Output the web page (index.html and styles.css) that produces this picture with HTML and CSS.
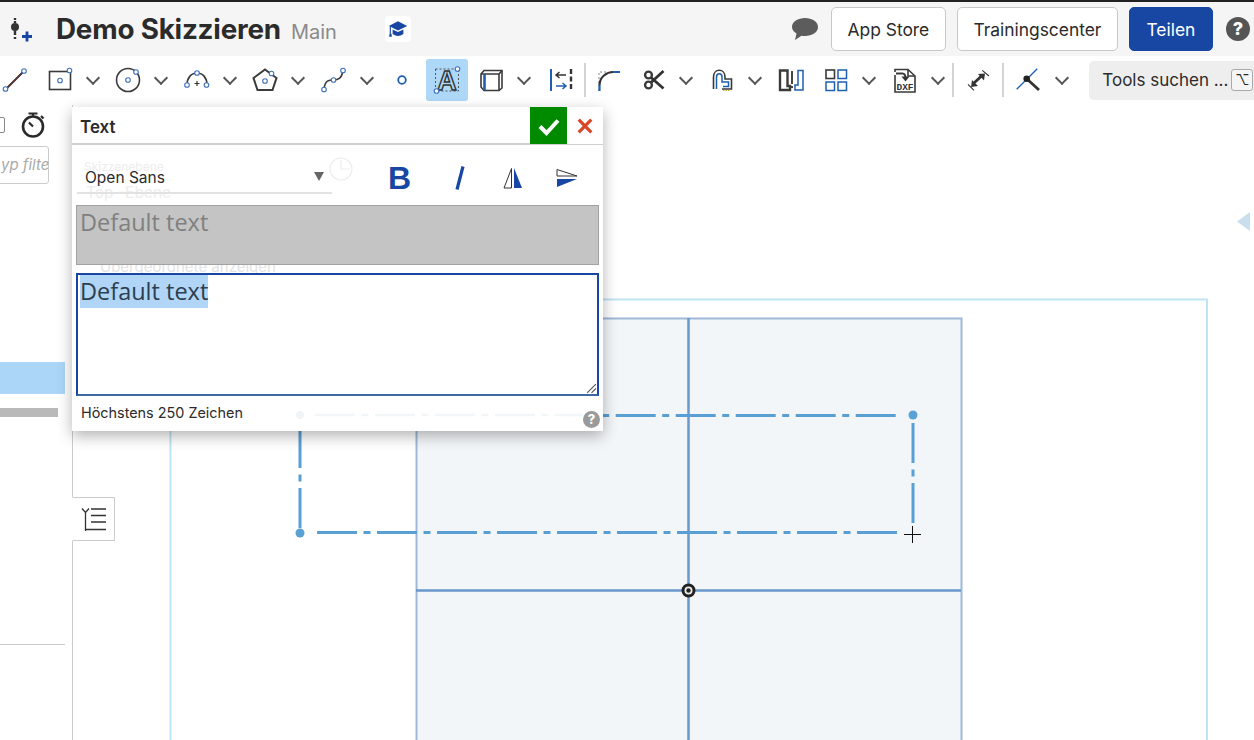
FILE: index.html
```html
<!DOCTYPE html>
<html lang="en">
<head>
    <meta charset="UTF-8">
    <meta name="viewport" content="width=device-width, initial-scale=1.0">
    <title>Demo Skizzieren</title>
    <link rel="stylesheet" href="styles.css">
</head>
<body>
    <header class="topbar">
        <svg class="doc-icon" viewBox="0 0 26 26">
            <path d="M6 1v2M6 16v2M6 20v2" stroke="#333" stroke-width="2.400" fill="none"/>
            <circle cx="6" cy="10" r="4" fill="#333"/>
            <path d="M6 4v2M6 14v2" stroke="#333" stroke-width="2.400"/>
            <path d="M13 19.500h10M18 14.500v10" stroke="#1747a3" stroke-width="2.800"/>
        </svg>
        <h1 class="doc-title">Demo Skizzieren</h1>
        <span class="doc-branch">Main</span>
        <span class="hat">
            <svg viewBox="0 0 26 26">
                <path d="M13 3 25 9l-12 6L1 9z" fill="#1747a3"/>
                <path d="M6 13.500v6q7 5 14 0v-6l-7 3.500z" fill="#1747a3"/>
                <path d="M3 10v9" stroke="#1747a3" stroke-width="1.500"/>
                <path d="M2 19h2.500l.5 4H1.500z" fill="#1747a3"/>
            </svg>
        </span>
        <svg class="chat" viewBox="0 0 28 26">
            <path d="M14 2c7 0 13 3.500 13 9s-6 9-13 9q-2 0-3.500-.3L4 24l1.500-6.500C3 16 1 13.800 1 11c0-5.500 6-9 13-9z" fill="#5c5c5c"/>
        </svg>
        <button class="btn app-store">App Store</button>
        <button class="btn training">Trainingscenter</button>
        <button class="btn share">Teilen</button>
        <span class="help-top">?</span>
    </header>

    <nav class="toolbar">
        <span class="tool first">
            <svg viewBox="0 0 32 32"><path d="M7 25 25 7" stroke="#222" stroke-width="1.800"/><path d="M8 24 24 8" stroke="#c0392b" stroke-width=".5"/><circle class="pt" cx="6.500" cy="25" r="2.300"/><circle class="pt" cx="25" cy="7" r="2.300"/></svg>
        </span>
        <span class="tool">
            <svg viewBox="0 0 32 32"><rect x="5.500" y="7.500" width="21" height="18" class="ln"/><circle class="pt" cx="16" cy="16.500" r="2.300"/><circle class="pt" cx="25.500" cy="6.500" r="2.300"/></svg>
        </span>
        <span class="chev"></span>
        <span class="tool">
            <svg viewBox="0 0 32 32"><circle cx="16" cy="16" r="11.500" class="ln"/><circle class="pt" cx="16" cy="16" r="2.300"/><circle class="pt" cx="24" cy="8" r="2.300"/></svg>
        </span>
        <span class="chev"></span>
        <span class="tool">
            <svg viewBox="0 0 32 32"><path d="M6 21c0-7 4-12 10-12s10 5 10 12" class="ln"/><circle class="pt" cx="6" cy="21" r="2.300"/><circle class="pt" cx="16" cy="9" r="2.300"/><circle class="pt" cx="25.500" cy="21" r="2.300"/><path d="M13.500 19.500h5M16 17v5" stroke="#333" stroke-width="1.200"/></svg>
        </span>
        <span class="chev"></span>
        <span class="tool">
            <svg viewBox="0 0 32 32"><path d="M16 5.500 27.500 14l-4 12h-15l-4-12z" class="ln thick"/><circle class="pt" cx="16" cy="17" r="2.300"/><circle class="pt" cx="22.500" cy="9.500" r="2.300"/></svg>
        </span>
        <span class="chev"></span>
        <span class="tool">
            <svg viewBox="0 0 32 32"><path d="M6 25c1-9 5-9 9.500-9s8-1 9.500-9.500" class="ln"/><circle class="pt" cx="6" cy="25.500" r="2.300"/><circle class="pt" cx="15.500" cy="16" r="2.300"/><circle class="pt" cx="25" cy="6.500" r="2.300"/></svg>
        </span>
        <span class="chev"></span>
        <span class="tool point">
            <svg viewBox="0 0 32 32"><circle cx="16" cy="16" r="3.800" fill="#fff" stroke="#1f5fb0" stroke-width="1.800"/></svg>
        </span>
        <span class="tool active">
            <svg viewBox="0 0 32 32">
                <rect x="4.500" y="5" width="23" height="22" fill="none" stroke="#555" stroke-dasharray="2 2"/>
                <text x="16" y="25.500" text-anchor="middle" class="glyph">A</text>
                <circle class="pt" cx="26.500" cy="5" r="2.300"/><circle class="pt" cx="5.500" cy="27" r="2.300"/>
            </svg>
        </span>
        <span class="tool">
            <svg viewBox="0 0 32 32"><path d="M6 10 9 6.500h18V24l-3 2.500H9L6 23z" class="ln"/><path d="M6 10h18v16.500M24 10l3-3.500" class="ln"/><path d="M9.500 10v16" stroke="#1f5fb0" stroke-width="2.600"/></svg>
        </span>
        <span class="chev"></span>
        <span class="tool mirror">
            <svg viewBox="0 0 32 32"><path d="M6 5v22" stroke="#1f5fb0" stroke-width="2"/><path d="M26 5v22" stroke="#333" stroke-width="2.400" stroke-dasharray="5 2.500"/><path d="M11 22h10M17.500 19l3.500 3-3.500 3" stroke="#1f5fb0" stroke-width="1.500" fill="none"/><path d="M21 11H11M14.500 8 11 11l3.500 3" stroke="#333" stroke-width="1.500" fill="none"/></svg>
        </span>
        <span class="sep"></span>
        <span class="tool">
            <svg viewBox="0 0 32 32"><path d="M6 27V8h8" fill="none" stroke="#888" stroke-dasharray="2 2"/><path d="M6.500 21C6.500 13 14 8 20 8" fill="none" stroke="#333" stroke-width="2.200"/><path d="M6.500 27v-6M20 8h7" fill="none" stroke="#1f5fb0" stroke-width="2.200"/></svg>
        </span>
        <span class="tool">
            <svg viewBox="0 0 32 32"><circle cx="11.500" cy="11" r="3.400" class="ln heavy"/><circle cx="11.500" cy="21" r="3.400" class="ln heavy"/><path d="M14 13.500 26.500 24.500M14 18.500 26.500 7" stroke="#333" stroke-width="2.800"/></svg>
        </span>
        <span class="chev"></span>
        <span class="tool">
            <svg viewBox="0 0 32 32"><path d="M7.500 25V13c0-9 11.500-9 11.500 0v2h6.500v10H16" class="ln"/><path d="M10.500 25V13c0-4.500 5.500-4.500 5.500 0v5h6.500v4.500H17" class="ln blue-ln"/><path d="M17 26.500h7" stroke="#c9b23c" stroke-dasharray="1.500 1"/></svg>
        </span>
        <span class="chev"></span>
        <span class="tool use">
            <svg viewBox="0 0 32 32"><path d="M5 6.500h7.500V22H15v4H5z" class="ln heavy"/><path d="M17 7v13M17 22v2" stroke="#333" stroke-width="1.800"/><path d="M28 6.500h-5V21h-3v5h8z" class="ln blue-ln"/></svg>
        </span>
        <span class="tool">
            <svg viewBox="0 0 32 32"><rect x="6" y="6" width="8.500" height="8.500" class="ln"/><rect x="18" y="6" width="8.500" height="8.500" class="blu"/><rect x="6" y="18" width="8.500" height="8.500" class="blu"/><rect x="18" y="18" width="8.500" height="8.500" class="blu"/></svg>
        </span>
        <span class="chev"></span>
        <span class="tool">
            <svg viewBox="0 0 32 32"><path d="M6 8V5.500h13L26 12v16H6V11" class="ln"/><path d="M19 5.500V12h7" class="ln"/><path d="M7 9.500h6.500c3 0 3 3 3 5" class="ln thick"/><path d="m12.500 12.500 4 5 4-5z" fill="#333"/><text x="16" y="26" text-anchor="middle" class="dxf">DXF</text></svg>
        </span>
        <span class="chev"></span>
        <span class="sep"></span>
        <span class="tool dim">
            <svg viewBox="0 0 32 32"><path d="M12 19 19.500 12" stroke="#333" stroke-width="2.800"/><path d="M23 9.500 16 10l6 6.500zM9 23l7-1-6-6z" fill="#333"/><path d="M20.300 6.300 27 12M6 20.300l6 6" stroke="#333" stroke-width="1.100"/></svg>
        </span>
        <span class="sep"></span>
        <span class="tool dim">
            <svg viewBox="0 0 32 32"><path d="M4.700 25.300 25.300 4.700" stroke="#1f5fb0" stroke-width="1.300"/><path d="m15 15 12 11" stroke="#333" stroke-width="2.800"/><circle cx="14.700" cy="14.700" r="3.300" fill="#222"/></svg>
        </span>
        <span class="chev"></span>
        <div class="search">
            <span>Tools suchen ...</span>
            <span class="key">⌥</span>
        </div>
    </nav>

    <main class="workspace">
        <aside class="panel">
            <div class="panel-head">
                <span class="check"></span>
                <svg class="timer" viewBox="0 0 26 28">
                    <circle cx="13" cy="15.500" r="10" fill="none" stroke="#2a2a2a" stroke-width="2.600"/>
                    <path d="M8.500 2.500h9M13 2.500v3M21 5l2.500 2.500M13 15.500l-4-4" stroke="#2a2a2a" stroke-width="2.200" fill="none"/>
                </svg>
            </div>
            <div class="filter"><span>yp filte</span></div>
            <div class="row-selected"></div>
            <div class="row-bar"></div>
            <div class="panel-rule"></div>
        </aside>

        <div class="canvas">
            <svg viewBox="73 105 1181 635">
                <path d="M170.500 740V299.500H1207V740" class="plane"/>
                <rect x="416.500" y="318.500" width="545" height="430" class="sheet"/>
                <path d="M688.500 318V740M416 590.500H961" class="axis"/>
                <path d="M317 532.500H901" class="dash"/>
                <path d="M315.700 415.500H901" class="dash"/>
                <path d="M913 423V523M300 428V528" class="dash"/>
                <circle cx="913" cy="415" r="4.500" fill="#5aa1d6"/>
                <circle cx="300" cy="533" r="4.500" fill="#5aa1d6"/>
                <circle cx="688.500" cy="590.500" r="5.500" fill="#eee" stroke="#222" stroke-width="3"/>
                <circle cx="688.500" cy="590.500" r="2.200" fill="#222"/>
                <path d="M904 534.500h17M912.500 526v17" stroke="#111" stroke-width="1"/>
                <path d="M1250 212v19l-13-9.500z" fill="#c9dfee"/>
            </svg>
        </div>

        <section class="dialog">
            <div class="dialog-head">
                <span class="dialog-title">Text</span>
                <button class="ok">
                    <svg viewBox="0 0 24 24"><path d="M3 12.500 9.500 19 21 6.500" fill="none" stroke="#fff" stroke-width="4"/></svg>
                </button>
                <button class="cancel">
                    <svg viewBox="0 0 20 20"><path d="M3 3l14 14M17 3 3 17" stroke="#d9472b" stroke-width="3.600"/></svg>
                </button>
            </div>
            <div class="font-row">
                <span class="ghost ghost-a">Skizzenebene</span>
                <span class="ghost ghost-b">Top -Ebene</span>
                <svg class="ghost-clock" viewBox="0 0 24 24"><circle cx="12" cy="12" r="11" fill="none" stroke="#eee" stroke-width="1.200"/><path d="M12 3v9h9" fill="none" stroke="#eee" stroke-width="1.200"/></svg>
                <div class="font-select">
                    <span>Open Sans</span>
                    <i class="caret"></i>
                </div>
                <div class="format">
                    <span class="fmt-b">B</span>
                    <span class="fmt-i">
                        <svg viewBox="0 0 12 26"><path d="M9 1.500 3 24.500" stroke="#1747a3" stroke-width="3.200"/></svg>
                    </span>
                    <svg class="fmt-flip" viewBox="0 0 20 22"><path d="M8.500 1.500V21H1z" fill="#fff" stroke="#333" stroke-width="1"/><path d="M11 1v20h8z" fill="#1747a3"/></svg>
                    <svg class="fmt-turn" viewBox="0 0 22 20"><path d="M1 1.500V8h20z" fill="#fff" stroke="#333" stroke-width="1"/><path d="M1 11v8l20-8z" fill="#1747a3"/></svg>
                </div>
            </div>
            <div class="preview">Default text</div>
            <span class="ghost ghost-c">Übergeordnete anzeigen</span>
            <div class="text-input">
                <span class="selected">Default text</span>
                <svg class="grip" viewBox="0 0 10 10"><path d="M1 9 9 1M5 9l4-4" stroke="#555" stroke-width="1"/></svg>
            </div>
            <svg class="ghost-line" viewBox="0 0 531 8"><circle cx="228" cy="4" r="4" fill="#f0f4f7"/><path d="M243 4H511" fill="none" stroke="#f3f6f8" stroke-width="2.500" stroke-dasharray="40 6.500 7 6.500"/></svg>
            <div class="dialog-foot">
                <span>Höchstens 250 Zeichen</span>
                <span class="help-small">?</span>
            </div>
        </section>

        <div class="side-tab">
            <svg viewBox="0 0 26 26"><path d="M1 2.500 4.500 6.500 8 2.500M4.500 7v18M10 3h15M10 9.500h15M10 16h15M5 23.500h20" stroke="#333" stroke-width="1.300" fill="none"/></svg>
        </div>
    </main>
</body>
</html>
```

FILE: styles.css
```css
* {
    box-sizing: border-box;
}

body {
    font-family: Inter, "Liberation Sans", sans-serif;
    margin: 0;
    height: 740px;
    overflow: hidden;
    background-color: #fff;
    color: #2b2b2b;
    display: flex;
    flex-direction: column;
}

.topbar {
    height: 56px;
    flex: none;
    display: flex;
    align-items: center;
    background-color: #f5f5f5;
    border-top: 2px solid #222;
    padding-left: 9px;
}

.doc-icon {
    width: 26px;
    height: 26px;
    margin-top: 2px;
}

.doc-title {
    font-size: 27.800px;
    font-weight: 700;
    margin: 0 0 0 21px;
    letter-spacing: -0.2px;
}

.doc-branch {
    font-size: 20px;
    color: #8a8a8a;
    margin: 5px 0 0 10px;
}

.hat {
    width: 26px;
    height: 26px;
    margin-left: 48px;
    padding: 3px;
    background-color: #fff;
    border-radius: 4px;
}

.hat svg {
    display: block;
}

.chat {
    width: 28px;
    height: 26px;
    margin-left: 380px;
}

.btn {
    font: inherit;
    font-size: 17.400px;
    height: 44px;
    border: 1px solid #c8c8c8;
    border-radius: 5px;
    background-color: #fff;
    color: #2b2b2b;
}

.app-store {
    width: 115px;
    margin-left: 12px;
}

.training {
    width: 161px;
    margin-left: 11px;
}

.share {
    width: 84px;
    margin-left: 11px;
    background-color: #1747a3;
    border-color: #1747a3;
    color: #fff;
}

.help-top {
    width: 24px;
    height: 24px;
    margin-left: 13px;
    border-radius: 50%;
    background-color: #555;
    color: #fff;
    font-size: 18px;
    font-weight: 800;
    line-height: 24px;
    text-align: center;
}

.toolbar {
    height: 49px;
    flex: none;
    display: flex;
    align-items: center;
    background-color: #fff;
}

.tool {
    width: 44px;
    height: 42px;
    flex: none;
    display: flex;
    align-items: center;
    justify-content: center;
    margin-top: -2px;
}

.tool svg {
    width: 32px;
    height: 32px;
}

.tool.first {
    margin-left: -7px;
    margin-right: 1px;
}

.tool.point {
    margin-right: 2px;
}

.tool.active {
    width: 42px;
    margin: -2px 1px 0 0;
    background-color: #aed8f7;
    border-radius: 3px;
}

.tool.mirror {
    margin-left: 2px;
}

.tool.dim {
    width: 46px;
}

.tool.use {
    margin-left: 1px;
    margin-right: 1px;
}

.ln {
    fill: none;
    stroke: #3a3a3a;
    stroke-width: 1.600;
}

.ln.thick {
    stroke-width: 2;
}

.ln.heavy {
    stroke-width: 2.400;
}

.ln.blue-ln {
    stroke: #1f5fb0;
    stroke-width: 1.500;
}

.pt {
    fill: #fff;
    stroke: #3f72b8;
    stroke-width: 1.100;
}

.blu {
    fill: #fff;
    stroke: #1f5fb0;
    stroke-width: 1.500;
}

.glyph {
    font-family: "Liberation Sans", sans-serif;
    font-size: 27px;
    font-weight: 700;
    fill: #aed8f7;
    stroke: #333;
    stroke-width: 1.400;
}

.dxf {
    font-family: "Liberation Mono", monospace;
    font-size: 9.500px;
    font-weight: 700;
    fill: #333;
}

.chev {
    width: 24.400px;
    height: 42px;
    flex: none;
    position: relative;
    margin-top: -2px;
}

.chev::after {
    content: "";
    position: absolute;
    left: 6px;
    top: 14px;
    width: 8px;
    height: 8px;
    border-right: 2px solid #555;
    border-bottom: 2px solid #555;
    transform: rotate(45deg);
}

.sep {
    width: 2px;
    height: 34px;
    flex: none;
    background-color: #d4d4d4;
    margin: -2px 1px 0;
}

.search {
    width: 165px;
    height: 39px;
    flex: none;
    margin: -1px 0 0 14px;
    padding-left: 13px;
    display: flex;
    align-items: center;
    justify-content: space-between;
    background-color: #eee;
    border-radius: 5px 0 0 5px;
    font-size: 17px;
}

.key {
    width: 22px;
    height: 22px;
    margin-right: 1px;
    border: 1px solid #aaa;
    border-radius: 3px;
    background-color: #f5f5f5;
    font-size: 14px;
    text-align: center;
    line-height: 20px;
}

.workspace {
    flex: 1;
    display: flex;
    position: relative;
    min-height: 0;
}

.panel {
    width: 73px;
    flex: none;
    border-right: 1px solid #ccc;
    padding-right: 7px;
    overflow: hidden;
}

.panel-head {
    height: 41px;
    padding-bottom: 2px;
    display: flex;
    align-items: center;
    justify-content: space-between;
    padding-right: 19px;
}

.check {
    width: 13px;
    height: 16px;
    margin-left: -8px;
    border: 1px solid #888;
    border-radius: 2px;
}

.timer {
    width: 26px;
    height: 28px;
}

.filter {
    width: 80px;
    height: 38px;
    margin-left: -31px;
    border: 1px solid #ccc;
    border-radius: 3px;
    font-size: 15px;
    font-style: italic;
    color: #aaa;
    line-height: 36px;
    padding-left: 31px;
    white-space: nowrap;
}

.row-selected {
    height: 32px;
    margin-top: 178px;
    background-color: #acd6f8;
}

.row-bar {
    width: 58px;
    height: 9px;
    margin-top: 14px;
    background-color: #b9b9b9;
}

.panel-rule {
    height: 1px;
    margin-top: 227px;
    background-color: #ccc;
}

.canvas {
    flex: 1;
    min-width: 0;
}

.canvas svg {
    display: block;
    width: 1181px;
    height: 635px;
}

.plane {
    fill: none;
    stroke: #bfe3f3;
    stroke-width: 2;
}

.sheet {
    fill: #f3f6f8;
    stroke: #9db8d9;
    stroke-width: 2;
}

.axis {
    fill: none;
    stroke: #6a97cc;
    stroke-width: 2.500;
}

.dash {
    fill: none;
    stroke: #5a9fd4;
    stroke-width: 3;
    stroke-dasharray: 40 6.500 7 6.500;
}

.dialog {
    position: absolute;
    left: 72px;
    top: 2px;
    width: 531px;
    height: 324px;
    background-color: #fff;
    box-shadow: 0 5px 14px rgba(0, 0, 0, 0.3);
    display: flex;
    flex-direction: column;
}

.dialog-head {
    height: 38px;
    flex: none;
    display: flex;
    align-items: stretch;
    border-bottom: 2px solid #ccd0d2;
}

.dialog-title {
    flex: 1;
    font-size: 17px;
    font-weight: 600;
    line-height: 37px;
    padding: 2px 0 0 8px;
}

.ok,
.cancel {
    border: none;
    padding: 0;
    display: flex;
    align-items: center;
    justify-content: center;
}

.ok {
    width: 37px;
    height: 37px;
    background-color: #008a00;
}

.ok svg {
    width: 24px;
    height: 24px;
}

.cancel {
    width: 36px;
    height: 37px;
    background-color: #fff;
}

.cancel svg {
    width: 18px;
    height: 18px;
}

.font-row {
    height: 60px;
    flex: none;
    display: flex;
    align-items: center;
    padding: 0 0 4px 5px;
    position: relative;
}

.ghost {
    position: absolute;
    color: #ededed;
    font-size: 15px;
    line-height: 14px;
    white-space: nowrap;
}

.ghost-a {
    left: 12px;
    top: 15px;
    font-size: 12px;
}

.ghost-b {
    left: 14px;
    top: 41px;
    font-size: 15.500px;
}

.ghost-c {
    left: 28px;
    top: 154px;
    line-height: 12px;
    color: #e4e4e4;
}

.ghost-clock {
    position: absolute;
    left: 257px;
    top: 12px;
    width: 24px;
    height: 24px;
}

.ghost-line {
    position: absolute;
    left: 0;
    top: 304px;
    width: 531px;
    height: 8px;
}

.font-select {
    width: 255px;
    height: 35px;
    margin-top: 7px;
    padding: 3px 8px 0;
    display: flex;
    align-items: center;
    justify-content: space-between;
    border-bottom: 2px solid #e2e2e2;
    font-size: 15.500px;
    position: relative;
}

.caret {
    width: 0;
    height: 0;
    border-left: 5.500px solid transparent;
    border-right: 5.500px solid transparent;
    border-top: 9px solid #666;
    margin: 0 0 2px;
}

.format {
    display: flex;
    align-items: center;
    position: relative;
    margin: 10px 0 0 56px;
}

.fmt-b {
    font-family: "Liberation Sans", sans-serif;
    font-size: 32px;
    font-weight: 700;
    color: #1747a3;
    line-height: 32px;
    width: 24px;
}

.fmt-i {
    width: 12px;
    height: 26px;
    margin-left: 42px;
}

.fmt-i svg {
    display: block;
}

.fmt-flip {
    width: 20px;
    height: 22px;
    margin-left: 37px;
}

.fmt-turn {
    width: 22px;
    height: 20px;
    margin-left: 33px;
}

.preview {
    height: 60px;
    flex: none;
    margin: 0 4px;
    background-color: #c4c4c4;
    border: 1px solid #a2a2a2;
    font-family: "Open Sans", sans-serif;
    font-size: 23.500px;
    color: #808080;
    padding: 0 0 0 3px;
    line-height: 32px;
    position: relative;
    z-index: 1;
}

.text-input {
    height: 123px;
    flex: none;
    margin: 8px 4px 0;
    border: 2px solid #1747a3;
    border-bottom-color: #3d6aa3;
    font-family: "Open Sans", sans-serif;
    font-size: 23.500px;
    color: #2c3e50;
    padding: 0 0 0 2px;
    line-height: 32px;
    position: relative;
    z-index: 1;
    background-color: #fff;
}

.selected {
    background-color: #b0d5f6;
    padding-bottom: 1px;
}

.grip {
    position: absolute;
    right: 0;
    bottom: 0;
    width: 11px;
    height: 11px;
}

.dialog-foot {
    flex: 1;
    display: flex;
    justify-content: space-between;
    padding: 8px 3px 3px 9px;
    font-size: 14.400px;
    position: relative;
}

.help-small {
    width: 17px;
    height: 17px;
    margin-top: 7px;
    border-radius: 50%;
    background-color: #9a9a9a;
    color: #fff;
    font-size: 13px;
    font-weight: 800;
    line-height: 17px;
    text-align: center;
}

.side-tab {
    position: absolute;
    left: 72px;
    top: 392px;
    width: 43px;
    height: 44px;
    background-color: #fff;
    border: 1px solid #ccc;
    border-left-color: #fff;
    display: flex;
    align-items: center;
    justify-content: center;
}

.side-tab svg {
    width: 26px;
    height: 26px;
}
```
